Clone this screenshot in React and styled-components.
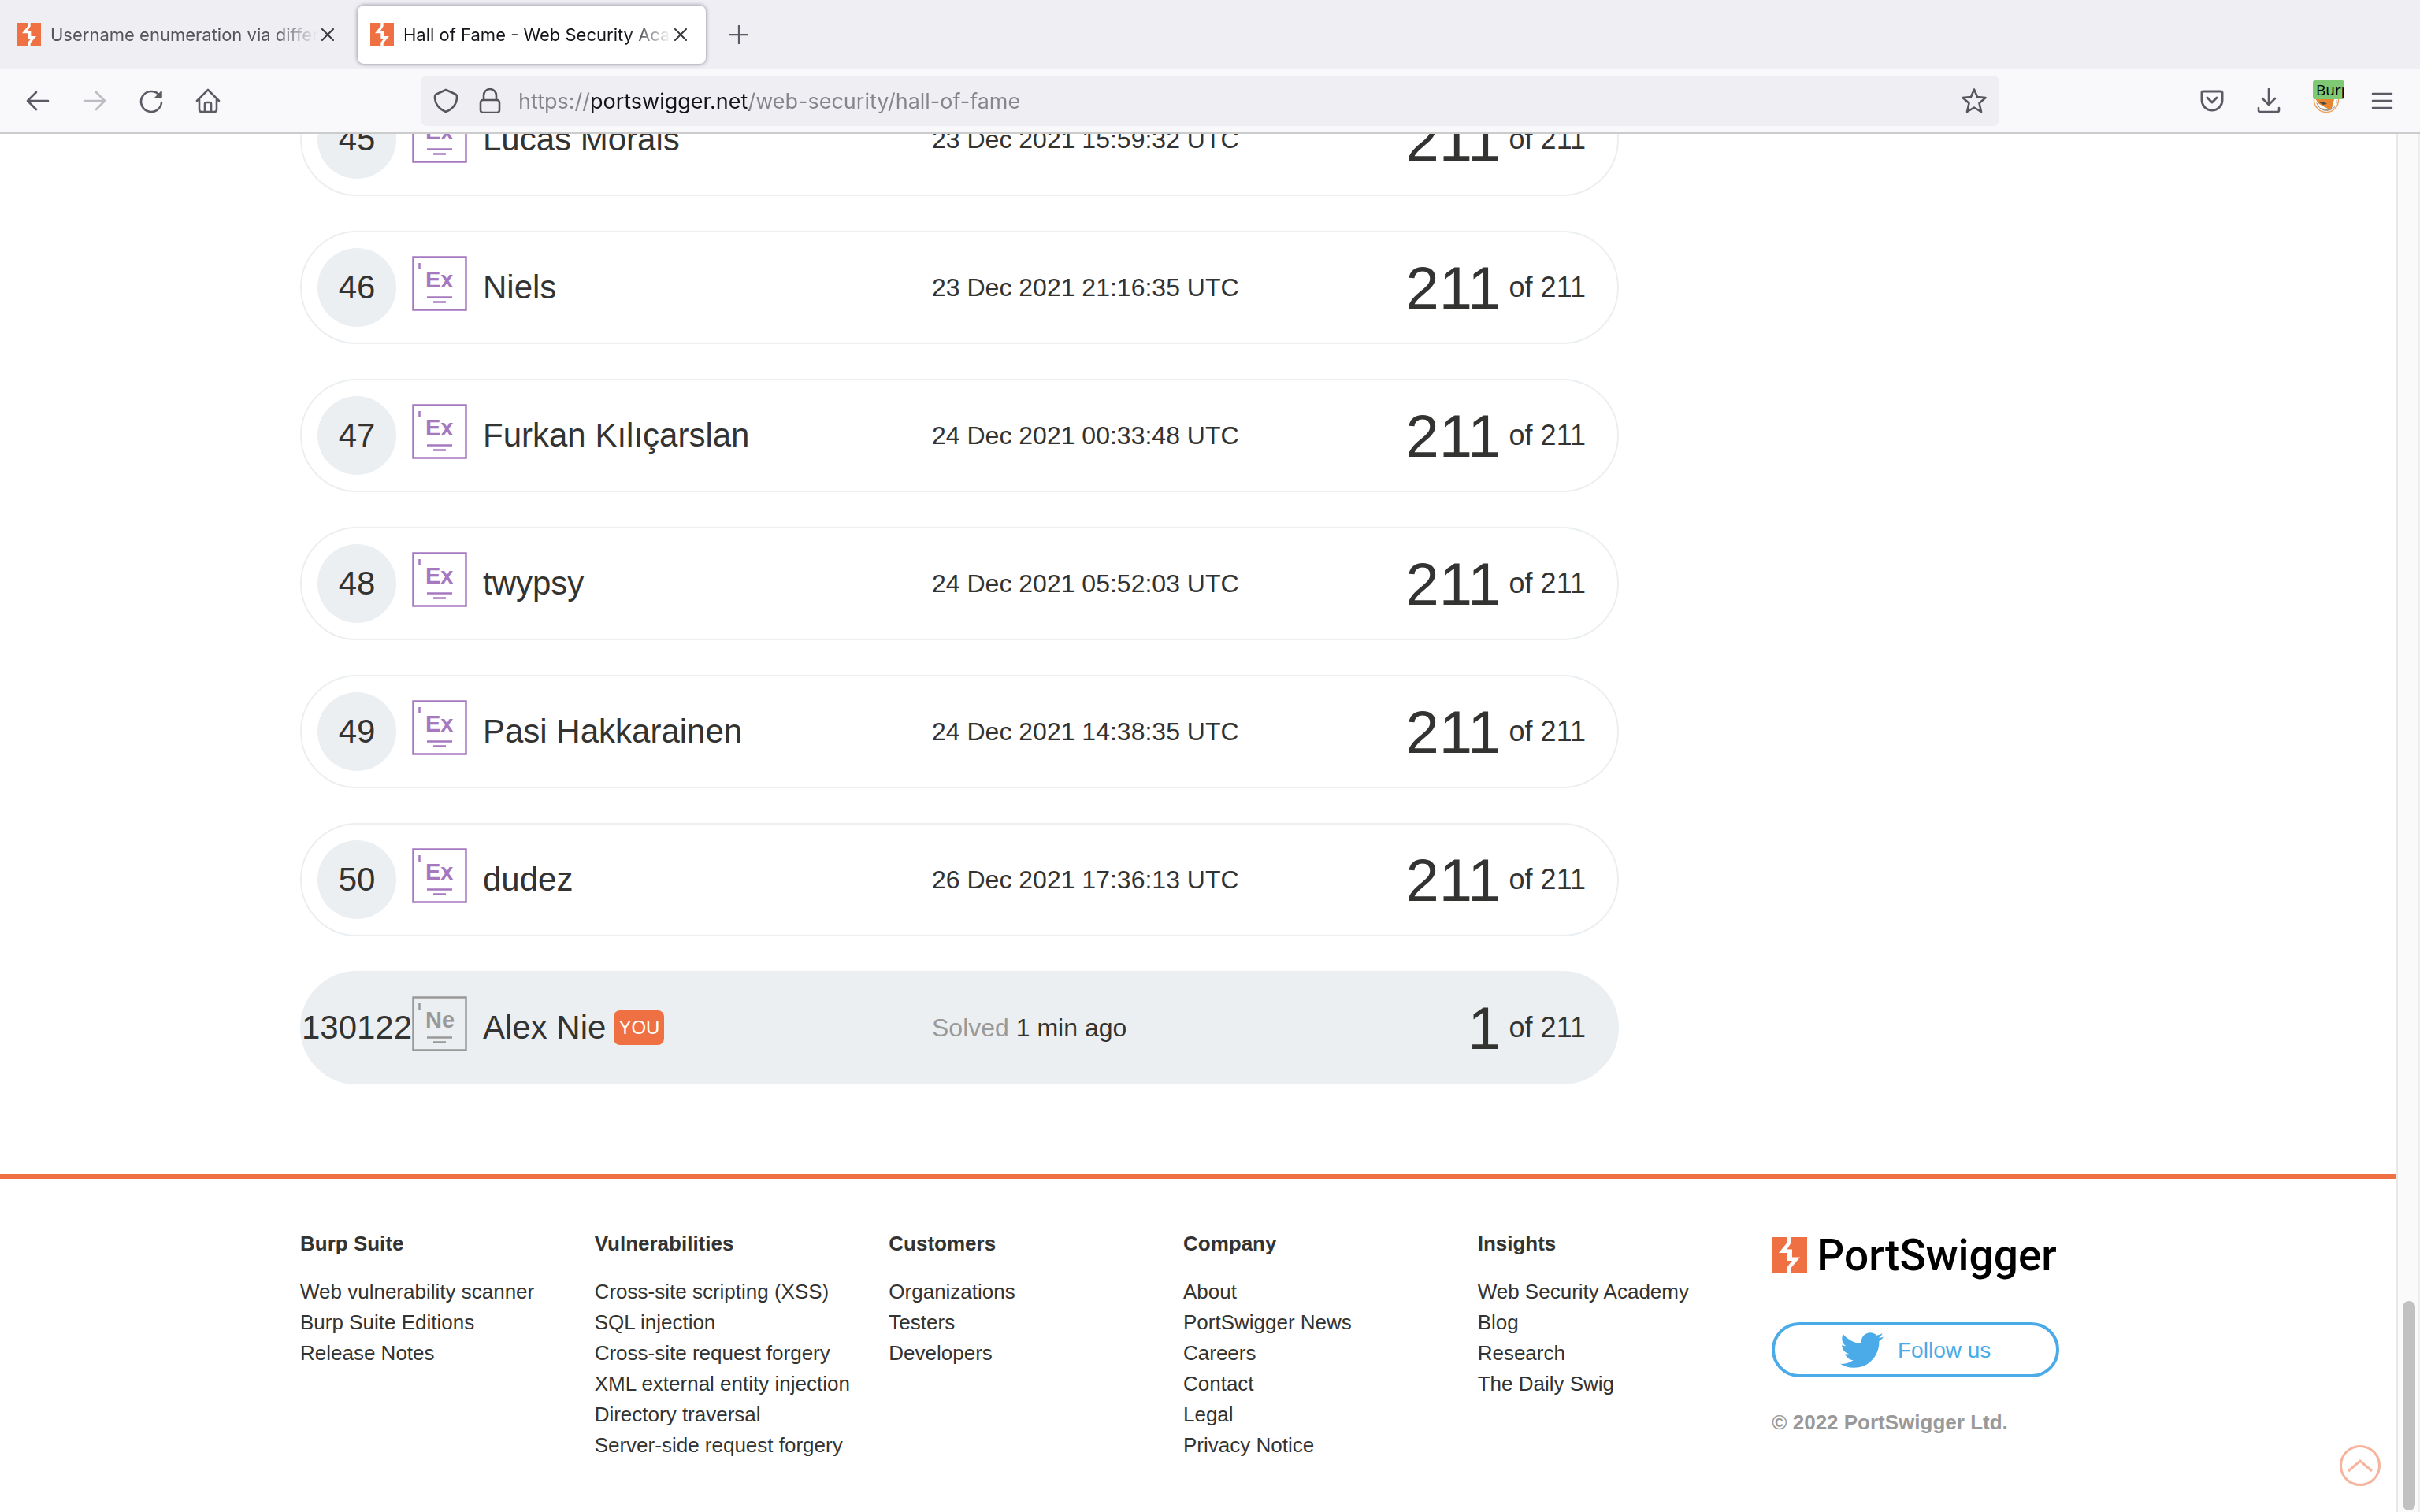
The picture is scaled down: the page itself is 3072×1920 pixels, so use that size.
import React from "react";
import styled, { createGlobalStyle } from "styled-components";
import { FaTwitter } from "react-icons/fa";

const orange = "#ef7143";
const ink = "#333332";
const mist = "#ebeff2";
const uiFont = 'Inter, Roboto, "Liberation Sans", sans-serif';
const pageFont = '"Liberation Sans", Arial, sans-serif';

const GlobalStyle = createGlobalStyle`
  *, *::before, *::after { box-sizing: border-box; }
  body { margin: 0; background: #fff; }
  button { border: 0; padding: 0; background: none; font: inherit; color: inherit; cursor: pointer; }
  ul, ol { list-style: none; margin: 0; padding: 0; }
  svg { display: block; }
`;

const Window = styled.div`
  display: flex;
  flex-direction: column;
  height: 100vh;
  overflow: hidden;
  color: ${ink};
  font-family: ${pageFont};
`;

/* ---------- browser chrome ---------- */

const TabStrip = styled.div`
  flex: none;
  display: flex;
  align-items: center;
  gap: 6px;
  height: 88px;
  padding: 0 6px;
  background: #efeef3;
  font-family: ${uiFont};
`;

const Tab = styled.div`
  display: flex;
  align-items: center;
  gap: 4px;
  width: 442px;
  height: 74px;
  padding: 0 24px 0 16px;
  border-radius: 8px;
  color: ${(p) => (p.$active ? "#15141a" : "#56555c")};
  background: ${(p) => (p.$active ? "#fff" : "transparent")};
  box-shadow: ${(p) => (p.$active ? "0 0 4px 1px rgba(100, 98, 120, 0.55)" : "none")};
`;

const TabTitle = styled.button`
  flex: 1;
  min-width: 0;
  padding-left: 8px;
  overflow: hidden;
  font-size: 22px;
  line-height: 32px;
  text-align: left;
  white-space: nowrap;
  mask-image: linear-gradient(to right, #000 calc(100% - 56px), transparent);
`;

const IconButton = styled.button`
  flex: none;
  display: grid;
  place-items: center;
  width: ${(p) => p.$size}px;
  height: ${(p) => p.$size}px;
  color: ${(p) => p.$color || "#5b5b66"};
`;

const Toolbar = styled.div`
  flex: none;
  display: grid;
  grid-template-columns: 502px minmax(0, 1fr) 502px;
  align-items: center;
  gap: 16px;
  height: 82px;
  padding: 0 16px;
  border-bottom: 2px solid #ccc;
  background: #f9f9fb;
  font-family: ${uiFont};
`;

const ToolGroup = styled.div`
  display: flex;
  gap: 8px;
  justify-content: ${(p) => (p.$end ? "flex-end" : "flex-start")};
`;

const AddressBar = styled.form`
  display: flex;
  align-items: center;
  height: 64px;
  padding: 0 8px 0 4px;
  border-radius: 8px;
  background: #efeef3;
`;

/* The host name is darker than the rest of the address. */
const AddressInput = styled.input`
  flex: 1;
  min-width: 0;
  height: 48px;
  margin-left: 8px;
  padding: 0;
  border: 0;
  outline: 0;
  font-family: ${uiFont};
  font-size: 27px;
  color: transparent;
  background: linear-gradient(to right, #86858b 93px, #15141a 93px, #15141a 293px, #86858b 293px);
  background-clip: text;
  -webkit-background-clip: text;
`;

/* ---------- page ---------- */

const Viewport = styled.div`
  flex: 1;
  min-height: 0;
  display: flex;
`;

const Page = styled.div`
  flex: 1;
  min-width: 0;
  display: flex;
  flex-direction: column;
  justify-content: flex-end;
  overflow: hidden;
`;

const Container = styled.div`
  width: 100%;
  max-width: 2280px;
  margin: 0 auto;
`;

const Board = styled.ol`
  display: flex;
  flex-direction: column;
  gap: 44px;
  max-width: 1674px;
  margin-bottom: 114px;
`;

const Row = styled.li`
  display: grid;
  grid-template-columns: 100px 70px 550px 1fr auto;
  align-items: center;
  gap: 20px;
  height: 144px;
  padding: 0 40px 0 20px;
  border: 2px solid ${mist};
  border-radius: 72px;
  background: ${(p) => (p.$you ? mist : "transparent")};
`;

const Rank = styled.span`
  display: flex;
  align-items: center;
  justify-content: center;
  height: 100px;
  border-radius: 50px;
  background: ${mist};
  font-size: 42px;
`;

const LevelBadge = styled.svg`
  width: 70px;
  height: 70px;
  margin-bottom: 10px;
  font: bold 29px ${pageFont};
`;

const Name = styled.span`
  display: flex;
  align-items: center;
  gap: 10px;
  font-size: 42px;
  white-space: nowrap;
`;

const YouTag = styled.span`
  padding: 0 6px;
  border-radius: 8px;
  background: ${orange};
  color: #fff;
  font-size: 24px;
  line-height: 44px;
`;

const When = styled.span`
  font-size: 32px;
`;

const Muted = styled.span`
  color: #999;
`;

const Score = styled.span`
  display: flex;
  align-items: center;
  gap: 10px;
  font-size: 36px;
`;

const Solved = styled.span`
  font-size: 76px;
`;

const Footer = styled.footer`
  border-top: 6px solid ${orange};
  padding: 63px 0 65px;
  font-size: 26px;
  line-height: 39px;
`;

const FooterGrid = styled(Container)`
  display: grid;
  grid-template-columns: repeat(6, minmax(0, 1fr));
  padding-right: 38px;
`;

const FooterHeading = styled.h2`
  margin: 0 0 22px;
  font-size: 26px;
  line-height: 39px;
`;

const FooterLink = styled.a`
  color: ${ink};
  text-decoration: none;
  white-space: nowrap;
`;

const Brand = styled.div`
  display: flex;
  flex-direction: column;
  align-items: stretch;
  padding: 11px 9px 0 0;
`;

const Logo = styled.a`
  display: flex;
  align-items: center;
  gap: 12px;
  height: 45px;
  color: #000;
  font: 500 55px Roboto, ${pageFont};
  text-decoration: none;
`;

const Follow = styled.a`
  display: flex;
  align-items: center;
  justify-content: center;
  gap: 18px;
  height: 70px;
  margin: 63px 0 38px;
  border: 4px solid #4aabe8;
  border-radius: 35px;
  color: #4aabe8;
  font-size: 28px;
  text-decoration: none;
`;

const Copyright = styled.small`
  color: #999;
  font-size: 26px;
  font-weight: bold;
`;

const ScrollTrack = styled.div`
  flex: none;
  display: flex;
  flex-direction: column;
  justify-content: flex-end;
  width: 30px;
  padding: 2px 4px 2px 6px;
  border-left: 2px solid #e8e8e8;
  border-right: 2px solid #ededed;
  background: #fafafa;
`;

const ScrollThumb = styled.div`
  width: 16px;
  height: 266px;
  border-radius: 8px;
  background: #c1c1c1;
`;

const ToTop = styled.a`
  position: fixed;
  right: 50px;
  bottom: 33px;
  display: grid;
  place-items: center;
  width: 52px;
  height: 52px;
  border: 3px solid #f6b49d;
  border-radius: 50%;
  color: #f6b49d;
`;

/* ---------- drawings ---------- */

const BoltMark = ({ size }) => (
  <svg width={size} height={size} viewBox="0 0 45 45" aria-hidden="true">
    <rect width="45" height="45" fill={orange} />
    <path
      d="M20 0h5v6.500L19.500 15.500H26V25.500H36L25 38.500V45H20V37.500L26 30H20V20H9L20 6.500Z"
      fill="#fff"
    />
  </svg>
);

const Line = ({ size = 32, w = 2.6, children, ...rest }) => (
  <svg
    width={size}
    height={size}
    viewBox="0 0 32 32"
    fill="none"
    stroke="currentColor"
    strokeWidth={w}
    strokeLinecap="round"
    strokeLinejoin="round"
    aria-hidden="true"
    {...rest}
  >
    {children}
  </svg>
);

const FoxIcon = () => (
  <svg width="48" height="52" viewBox="-8 0 48 52" aria-hidden="true">
    <circle cx="17" cy="25" r="15.500" fill="#fff" stroke="#f0a35c" strokeWidth="1.500" />
    <path d="M4 28C7 36 12 39 18 39C26 38 31 33 31 24L27 22L20 36Z" fill="#9b9b9b" />
    <path d="M3 23L10 35L22 37L28 28L30 20Z" fill="#e8852f" />
    <path d="M3 24L9 35L21 37L15 34L8 30Z" fill="#fff" />
    <path d="M24 36L27 24L31 24L29 32Z" fill="#fff" />
    <path d="M8 28L14 27L18 30L13 31Z" fill="#4a4a4a" />
    <rect x="0" y="0" width="40" height="24" rx="3" fill="#7fc874" />
    <svg width="40" height="24">
      <text x="4" y="19" fontSize="19" fontFamily="Open Sans, Noto Sans, sans-serif" fill="#000">
        Burp
      </text>
    </svg>
  </svg>
);

const Badge = ({ code, color }) => (
  <LevelBadge viewBox="0 0 70 70">
    <rect x="1.500" y="1.500" width="67" height="67" fill="none" stroke={color} strokeWidth="2.500" />
    <path d="M9.500 9v8" stroke={color} strokeWidth="2.500" />
    <text x="17" y="40" fill={color}>{code}</text>
    <path d="M19 52.500h32M27 58.500h16" stroke={color} strokeWidth="2.500" />
  </LevelBadge>
);

/* ---------- data ---------- */

const rows = [
  { rank: 45, name: "Lucas Morais", when: "23 Dec 2021 15:59:32 UTC" },
  { rank: 46, name: "Niels", when: "23 Dec 2021 21:16:35 UTC" },
  { rank: 47, name: "Furkan Kılıçarslan", when: "24 Dec 2021 00:33:48 UTC" },
  { rank: 48, name: "twypsy", when: "24 Dec 2021 05:52:03 UTC" },
  { rank: 49, name: "Pasi Hakkarainen", when: "24 Dec 2021 14:38:35 UTC" },
  { rank: 50, name: "dudez", when: "26 Dec 2021 17:36:13 UTC" },
];

const columns = [
  ["Burp Suite", ["Web vulnerability scanner", "Burp Suite Editions", "Release Notes"]],
  [
    "Vulnerabilities",
    [
      "Cross-site scripting (XSS)",
      "SQL injection",
      "Cross-site request forgery",
      "XML external entity injection",
      "Directory traversal",
      "Server-side request forgery",
    ],
  ],
  ["Customers", ["Organizations", "Testers", "Developers"]],
  ["Company", ["About", "PortSwigger News", "Careers", "Contact", "Legal", "Privacy Notice"]],
  ["Insights", ["Web Security Academy", "Blog", "Research", "The Daily Swig"]],
];

const tabs = [
  { title: "Username enumeration via different responses", active: false },
  { title: "Hall of Fame - Web Security Academy", active: true },
];

export default function App() {
  return (
    <Window>
      <GlobalStyle />
      <TabStrip>
        {tabs.map((tab) => (
          <Tab key={tab.title} $active={tab.active}>
            <BoltMark size={30} />
            <TabTitle>{tab.title}</TabTitle>
            <IconButton $size={16} $color="#38373d" aria-label="Close tab">
              <Line size={16} w={4}><path d="M2 2L30 30M30 2L2 30" /></Line>
            </IconButton>
          </Tab>
        ))}
        <IconButton $size={72} aria-label="New tab">
          <Line size={24} w={3}><path d="M16 1V31M1 16H31" /></Line>
        </IconButton>
      </TabStrip>

      <Toolbar>
        <ToolGroup>
          <IconButton $size={64} aria-label="Back">
            <Line><path d="M29 16H3M14 5L3 16L14 27" /></Line>
          </IconButton>
          <IconButton $size={64} $color="#bcbcc2" aria-label="Forward">
            <Line><path d="M3 16H29M18 5L29 16L18 27" /></Line>
          </IconButton>
          <IconButton $size={64} aria-label="Reload">
            <Line>
              <path d="M27 10A13 13 0 1 0 29 18" />
              <path d="M29 4V12H21Z" fill="currentColor" strokeWidth="1.500" />
            </Line>
          </IconButton>
          <IconButton $size={64} aria-label="Home">
            <Line>
              <path d="M2 16L16 2L30 16M5 14V27Q5 30 8 30H24Q27 30 27 27V14M12 30V20Q12 18 14 18H18Q20 18 20 20V30" />
            </Line>
          </IconButton>
        </ToolGroup>

        <AddressBar onSubmit={(e) => e.preventDefault()}>
          <IconButton type="button" $size={56} $color="#56555c" aria-label="Tracking protection">
            <Line><path d="M16 2L27 7Q30 8 30 11Q30 24 16 30Q2 24 2 11Q2 8 5 7Z" /></Line>
          </IconButton>
          <IconButton type="button" $size={56} $color="#56555c" aria-label="Connection secure">
            <Line>
              <rect x="4" y="15" width="24" height="16" rx="3" />
              <path d="M8 15V9A8 8 0 0 1 24 9V15" />
            </Line>
          </IconButton>
          <AddressInput
            aria-label="Address"
            defaultValue="https://portswigger.net/web-security/hall-of-fame"
          />
          <IconButton type="button" $size={48} $color="#56555c" aria-label="Bookmark this page">
            <Line>
              <path d="M16 1.500L20 11L30.500 12L22.500 19L25 30L16 24.500L7 30L9.500 19L1.500 12L12 11Z" />
            </Line>
          </IconButton>
        </AddressBar>

        <ToolGroup $end>
          <IconButton $size={64} aria-label="Save to Pocket">
            <Line w={3}>
              <path d="M5 4H27Q29 4 29 6V15A13 13 0 0 1 3 15V6Q3 4 5 4ZM10 12L16 18L22 12" />
            </Line>
          </IconButton>
          <IconButton $size={64} aria-label="Downloads">
            <Line><path d="M16 1V21M8 13L16 21L24 13M3 25V28Q3 30 5 30H27Q29 30 29 28V25" /></Line>
          </IconButton>
          <IconButton $size={64} aria-label="FoxyProxy: Burp">
            <FoxIcon />
          </IconButton>
          <IconButton $size={64} aria-label="Menu">
            <Line><path d="M4 7H28M4 16H28M4 25H28" /></Line>
          </IconButton>
        </ToolGroup>
      </Toolbar>

      <Viewport>
        <Page>
          <Container as="main">
            <Board>
              {rows.map((r) => (
                <Row key={r.rank}>
                  <Rank>{r.rank}</Rank>
                  <Badge code="Ex" color="#a678c0" />
                  <Name>{r.name}</Name>
                  <When>{r.when}</When>
                  <Score>
                    <Solved>211</Solved> of 211
                  </Score>
                </Row>
              ))}
              <Row $you>
                <Rank>130122</Rank>
                <Badge code="Ne" color="#999997" />
                <Name>
                  Alex Nie <YouTag>YOU</YouTag>
                </Name>
                <When>
                  <Muted>Solved</Muted> 1 min ago
                </When>
                <Score>
                  <Solved>1</Solved> of 211
                </Score>
              </Row>
            </Board>
          </Container>

          <Footer>
            <FooterGrid>
              {columns.map(([heading, links]) => (
                <nav key={heading} aria-label={heading}>
                  <FooterHeading>{heading}</FooterHeading>
                  <ul>
                    {links.map((l) => (
                      <li key={l}>
                        <FooterLink href="#">{l}</FooterLink>
                      </li>
                    ))}
                  </ul>
                </nav>
              ))}
              <Brand>
                <Logo href="#">
                  <BoltMark size={45} />
                  PortSwigger
                </Logo>
                <Follow href="#">
                  <FaTwitter size={55} />
                  Follow us
                </Follow>
                <Copyright>© 2022 PortSwigger Ltd.</Copyright>
              </Brand>
            </FooterGrid>
          </Footer>
        </Page>
        <ScrollTrack>
          <ScrollThumb />
        </ScrollTrack>
      </Viewport>

      <ToTop href="#" aria-label="Back to top">
        <svg width="32" height="18" viewBox="0 0 32 18" fill="none" stroke="currentColor" strokeWidth="3">
          <path d="M1 16L16 3L31 16" />
        </svg>
      </ToTop>
    </Window>
  );
}
